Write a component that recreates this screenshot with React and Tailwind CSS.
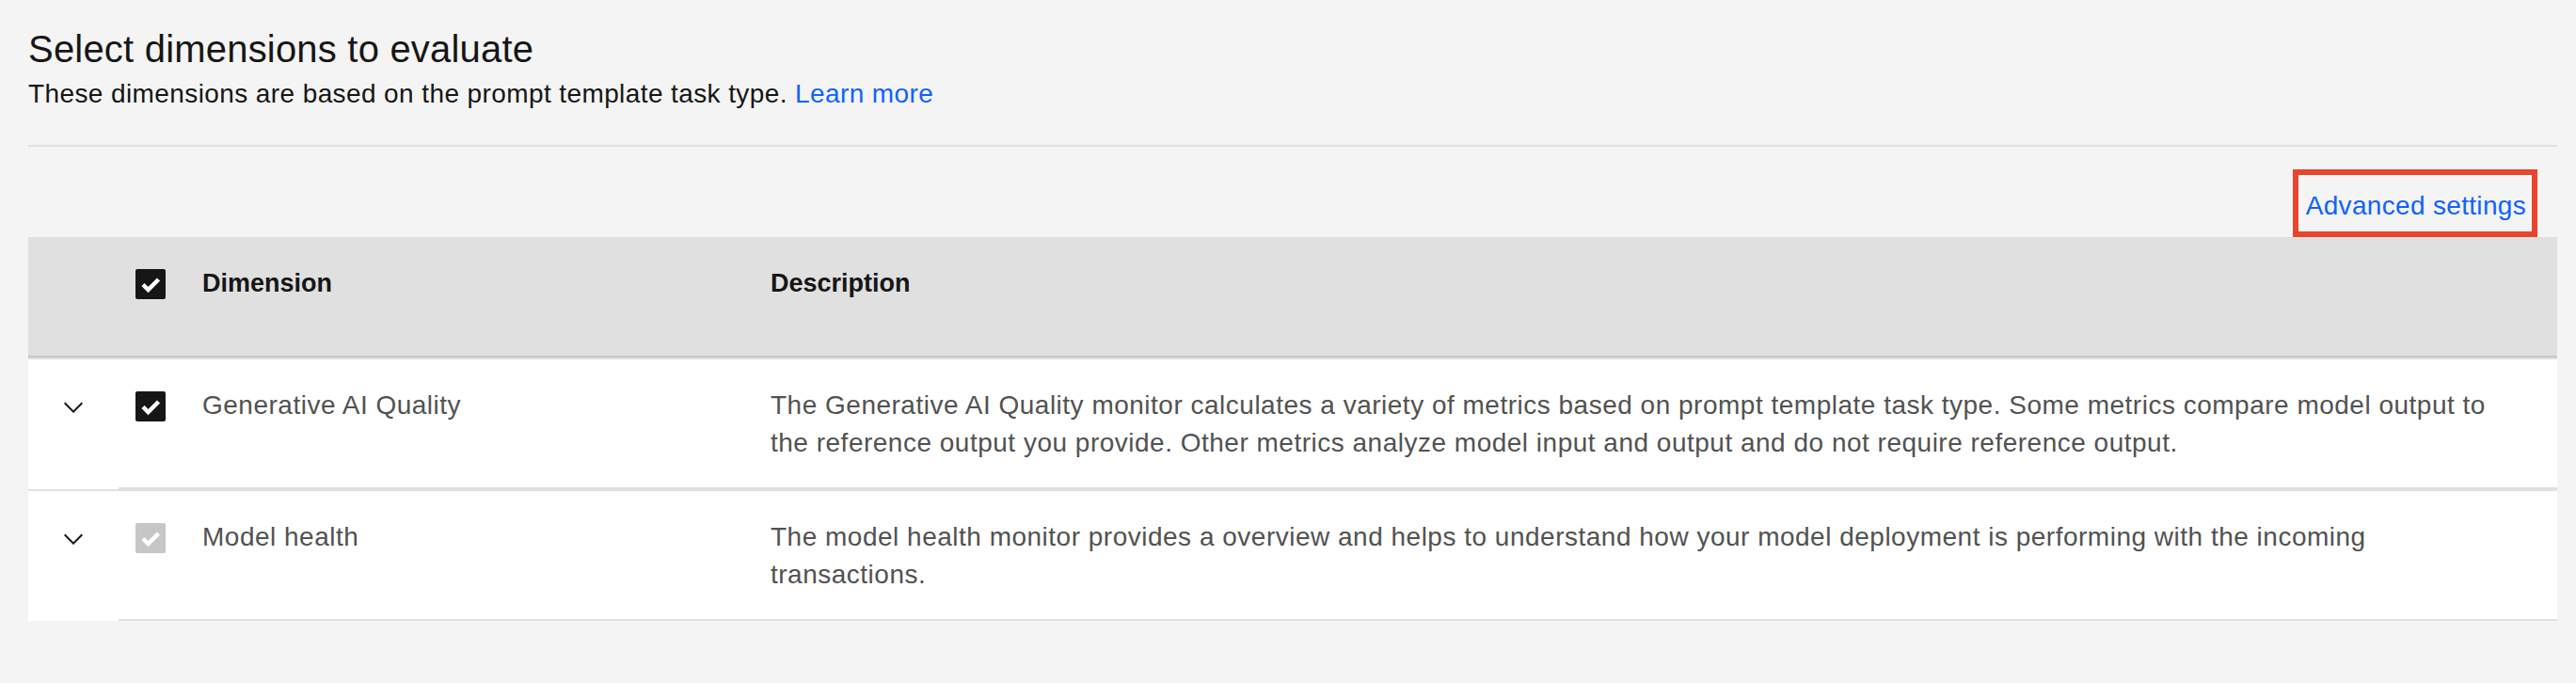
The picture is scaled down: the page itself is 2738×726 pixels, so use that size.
import React from "react";

function Check({ disabled }) {
  return (
    <div
      className={
        "w-[32px] h-[32px] rounded-[2px] flex items-center justify-center " +
        (disabled ? "bg-[#c6c6c6]" : "bg-[#161616]")
      }
    >
      <svg width="32" height="32" viewBox="0 0 32 32">
        <polyline
          points="8,16.5 13.5,22 24.5,11"
          fill="none"
          stroke="#ffffff"
          strokeWidth="4.5"
        />
      </svg>
    </div>
  );
}

function Chevron() {
  return (
    <svg width="32" height="32" viewBox="0 0 16 16">
      <path d="M8 11L3 6 3.7 5.3 8 9.6 12.3 5.3 13 6z" fill="#161616" />
    </svg>
  );
}

const rows = [
  {
    name: "Generative AI Quality",
    desc: "The Generative AI Quality monitor calculates a variety of metrics based on prompt template task type. Some metrics compare model output to the reference output you provide. Other metrics analyze model input and output and do not require reference output.",
    disabled: false,
  },
  {
    name: "Model health",
    desc: "The model health monitor provides a overview and helps to understand how your model deployment is performing with the incoming transactions.",
    disabled: true,
  },
];

export default function App() {
  return (
    <div className="min-h-[726px] w-full bg-[#f4f4f4] pl-[30px] pr-[20px] pt-[24px] font-['Liberation_Sans',Arial,sans-serif]">
      <h1 className="text-[40px] leading-[56px] tracking-[0.2px] font-normal text-[#161616]">
        Select dimensions to evaluate
      </h1>
      <p className="text-[28px] leading-[40px] tracking-[0.4px] text-[#161616]">
        These dimensions are based on the prompt template task type.{" "}
        <a className="text-[#0f62fe]">Learn more</a>
      </p>
      <div className="mt-[34px] h-[2px] bg-[#e0e0e0]" />
      <div className="mt-[24px] flex justify-end pr-[21px]">
        <div className="border-[6px] border-[#e9442c] pl-[8px] pr-[6px] pt-[13px] pb-[7px]">
          <a className="block text-[28px] leading-[40px] tracking-[0.32px] text-[#0f62fe]">
            Advanced settings
          </a>
        </div>
      </div>
      <div>
        <div className="grid grid-cols-[96px_89px_604px_1fr] h-[128px] bg-[#e0e0e0] border-b-2 border-[#c6c6c6]">
          <div />
          <div className="pl-[18px] pt-[34px]">
            <Check />
          </div>
          <div className="pt-[29px] text-[27px] leading-[40px] font-bold text-[#161616]">
            Dimension
          </div>
          <div className="pt-[29px] text-[27px] leading-[40px] font-bold text-[#161616]">
            Description
          </div>
        </div>
        {rows.map((r) => (
          <div
            key={r.name}
            className="grid grid-cols-[96px_89px_604px_1fr] border-t-2 border-[#e0e0e0] bg-white"
          >
            <div className="flex justify-center pt-[35px]">
              <Chevron />
            </div>
            <div className="pl-[18px] pt-[34px] border-b-2 border-[#e0e0e0]">
              <Check disabled={r.disabled} />
            </div>
            <div className="pt-[29px] pb-[27px] border-b-2 border-[#e0e0e0] text-[28px] leading-[40px] tracking-[0.5px] text-[#525252]">
              {r.name}
            </div>
            <div className="pt-[29px] pb-[27px] pr-[32px] border-b-2 border-[#e0e0e0] text-[28px] leading-[40px] tracking-[0.5px] text-[#525252]">
              {r.desc}
            </div>
          </div>
        ))}
      </div>
    </div>
  );
}
